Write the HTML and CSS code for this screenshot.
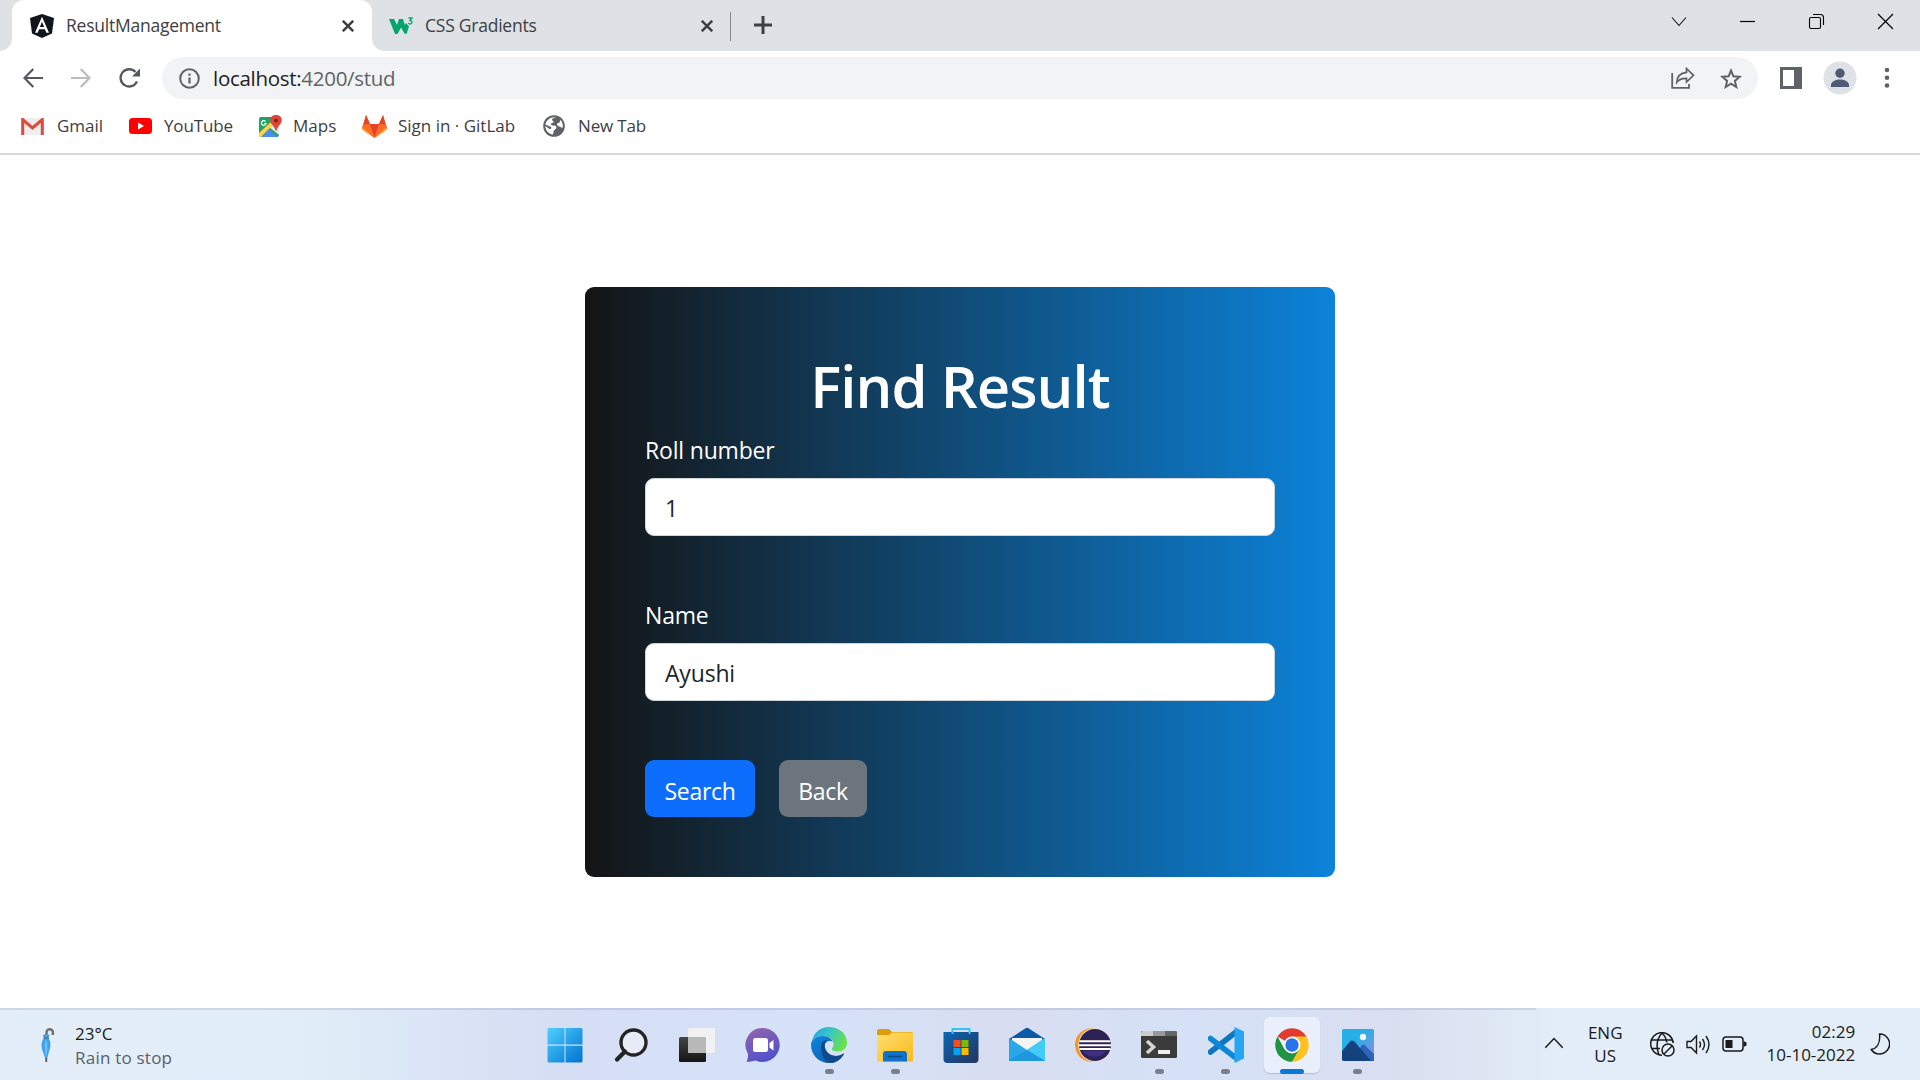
FILE: index.html
```html
<!DOCTYPE html>
<html lang="en">
<head>
<meta charset="utf-8">
<title>ResultManagement</title>
<link rel="stylesheet" href="styles.css">
</head>
<body>
<header class="browser">
  <div class="tabstrip">
    <div class="tab tab-active">
      <svg class="fav" width="24" height="24" viewBox="0 0 24 24"><path d="M12 0l12 4-2 15.500L12 24 2 19.500 0 4z" fill="#10141d"/><path fill-rule="evenodd" d="M12 2.800l7 16h-2.700l-1.400-3.600H9.100l-1.400 3.600H5zm0 5l-2.100 5.200h4.200z" fill="#fff"/></svg>
      <span class="tab-title">ResultManagement</span>
      <svg class="close" width="12" height="12" viewBox="0 0 12 12"><path d="M.8.800l10.400 10.400M11.200.8L.8 11.200" stroke="#3c4043" stroke-width="2.500"/></svg>
    </div>
    <div class="tab tab-second">
      <svg class="fav" width="24" height="18" viewBox="0 0 24 18"><path d="M0 2h5l3 6 2-6h4l2 6 1-2 3 3.500L17.500 17l-2-.5-3.500-6L8.500 17H6z" fill="#04a56d"/><path d="M19.500 1h3.500l-2 2.500c3 0 2.500 3.500 0 3.500-1 0-1.500-.4-1.800-1" fill="none" stroke="#04a56d" stroke-width="1.300"/></svg>
      <span class="tab-title">CSS Gradients</span>
      <svg class="close" width="12" height="12" viewBox="0 0 12 12"><path d="M.8.800l10.400 10.400M11.200.8L.8 11.200" stroke="#3c4043" stroke-width="2.500"/></svg>
    </div>
    <svg class="newtab" width="18" height="18" viewBox="0 0 18 18"><path d="M9 0v18M0 9h18" stroke="#3c4043" stroke-width="3"/></svg>
    <div class="winctl">
      <svg width="69" height="44" viewBox="0 0 69 44"><path d="M28 17.500l7 8 7-8" fill="none" stroke="#111" stroke-width="1.100"/></svg>
      <svg width="69" height="44" viewBox="0 0 69 44"><path d="M27 21.500h15" stroke="#000" stroke-width="1.200"/></svg>
      <svg width="69" height="44" viewBox="0 0 69 44"><rect x="27.500" y="17.500" width="11" height="11" rx="1.500" fill="none" stroke="#000" stroke-width="1.100"/><path d="M31 14.500h7.500a3 3 0 0 1 3 3V25" fill="none" stroke="#000" stroke-width="1.100"/></svg>
      <svg width="69" height="44" viewBox="0 0 69 44"><path d="M27 14l15 15M42 14L27 29" stroke="#000" stroke-width="1.200"/></svg>
    </div>
  </div>
  <div class="toolbar">
    <svg class="nav" width="20" height="20" viewBox="0 0 20 20"><path d="M20 10H1.500M10.300 1L1.500 10l8.800 9" fill="none" stroke="#55585d" stroke-width="2.200"/></svg>
    <svg class="nav" width="20" height="20" viewBox="0 0 20 20"><path d="M0 10h18.500M9.700 1l8.800 9-8.800 9" fill="none" stroke="#babcbe" stroke-width="2.200"/></svg>
    <svg class="nav" width="21" height="20" viewBox="0 0 21 20"><path d="M18 13.500A8.600 8.600 0 1 1 16.500 4" fill="none" stroke="#55585d" stroke-width="2.300"/><path d="M21 .500v8h-8z" fill="#55585d"/></svg>
    <div class="omnibox">
      <svg width="21" height="21" viewBox="0 0 21 21"><circle cx="10.500" cy="10.500" r="9.300" fill="none" stroke="#5f6368" stroke-width="2"/><path d="M10.500 9.500v6M10.500 5.500v2.200" stroke="#5f6368" stroke-width="2.200"/></svg>
      <span class="url">localhost:<span class="url-path">4200/stud</span></span>
      <svg class="share" width="24" height="22" viewBox="0 0 24 22"><path d="M1.200 6v14.800H18V17" fill="none" stroke="#5f6368" stroke-width="1.800"/><path d="M15.500 1.500l7 6.800-7 6.800V11.300c-4.500-.2-7.500 1-9.700 4C6 9.500 9.500 6 15.500 5.300z" fill="none" stroke="#5f6368" stroke-width="1.700"/></svg>
      <svg width="22" height="21" viewBox="0 0 22 21"><path d="M11 2.500l2.400 5.800 6.200.5-4.700 4.100 1.400 6.100L11 15.700 5.700 19l1.400-6.100-4.700-4.100 6.200-.5z" fill="none" stroke="#5f6368" stroke-width="2"/></svg>
    </div>
    <svg class="panel" width="22" height="22" viewBox="0 0 22 22"><path fill-rule="evenodd" d="M0 0h22v22H0zM3 3v16h11V3z" fill="#5f6368"/></svg>
    <svg class="avatar" width="34" height="34" viewBox="0 0 34 34"><circle cx="17" cy="17" r="16.500" fill="#dee1e6"/><circle cx="17" cy="12.300" r="4.700" fill="#4d5b75"/><path d="M8 26v-2c0-3.500 5-5.500 9-5.500s9 2 9 5.500v2z" fill="#4d5b75"/></svg>
    <svg class="dots" width="6" height="22" viewBox="0 0 6 22"><circle cx="3" cy="3" r="2.300" fill="#5f6368"/><circle cx="3" cy="10.800" r="2.300" fill="#5f6368"/><circle cx="3" cy="18.500" r="2.300" fill="#5f6368"/></svg>
  </div>
  <nav class="bookmarks">
    <a class="bm bm-gmail"><svg width="23" height="17" viewBox="0 0 23 17"><rect width="23" height="17" rx="1.500" fill="#eee"/><path d="M1.700 17V1.500L11.500 10l9.800-8.500V17" fill="none" stroke="#dd4b3e" stroke-width="3"/></svg><span>Gmail</span></a>
    <a class="bm bm-yt"><svg width="23" height="16" viewBox="0 0 23 16"><rect width="23" height="16" rx="3.500" fill="#f00"/><path d="M9 4.500v7l6-3.500z" fill="#fff"/></svg><span>YouTube</span></a>
    <a class="bm bm-maps"><svg width="23" height="23" viewBox="0 0 23 23"><rect x="0" y="2" width="20" height="20" rx="2" fill="#1fa463"/><path d="M0 20L18 3l2 2v15L10 12 1 21z" fill="#e5e7e8"/><path d="M0 18L13 6l2 3L2 22H0z" fill="#ffd24a"/><path d="M3 22l7-8 8 8z" fill="#4c8bf5"/><path d="M17 0c6.500 0 7 6 4 9.500-2 2.500-3 4-4 7-1-3-2-4.500-4-7C10 6 10.500 0 17 0z" fill="#e0453a"/><circle cx="17" cy="5.500" r="2" fill="#7a231b"/><path d="M6.500 6.500A2.300 2.300 0 1 0 7 8.500H5" fill="none" stroke="#fff" stroke-width="1.200"/></svg><span>Maps</span></a>
    <a class="bm bm-gl"><svg width="25" height="23" viewBox="0 0 25 23"><path d="M4 0l4 9h9l4-9 3.500 11.500c.5 1.500 0 3-1 4L12.500 23 1.500 15.500c-1-1-1.500-2.500-1-4z" fill="#fc6d26"/><path d="M4 0l4 9h9l4-9 2.500 9-11 13-11-13z" fill="#e24329"/><path d="M1 9.500L8 9l4.500 13L0 13.500zM24 9.500L17 9l-4.500 13L25 13.500z" fill="#fc6d26"/><path d="M.5 12l12 11 12-11-.5 3-11.500 8L1 15z" fill="#fca326"/></svg><span>Sign in · GitLab</span></a>
    <a class="bm bm-new"><svg width="22" height="22" viewBox="0 0 22 22"><circle cx="11" cy="11" r="10.800" fill="#5f6368"/><path d="M13 2.300c-1.500 1-3.500.7-4 2.200s2 1 1.500 2.500-3 .8-2.500 2.500 3 .5 4.500 1.500 1 2.500-.5 3.500-1.500 2-2 5C5.500 19 2.500 15.500 2.300 11l4.200 3c1.500 0 2.200-.5 1.700-2L2.400 9.500C3.200 5 7.500 1.500 13 2.300zM17.500 5c2 2 2.700 4.500 2.200 7.500-1.200.8-2.200-.8-3-1s-2 0-2.500-1.500.5-2 1.800-2.200S16.500 6 17.500 5z" fill="#fff"/></svg><span>New Tab</span></a>
  </nav>
</header>

<main class="page">
  <form class="card">
    <h1>Find Result</h1>
    <label for="roll">Roll number</label>
    <div class="field" id="roll">1</div>
    <label class="l-name" for="name">Name</label>
    <div class="field" id="name">Ayushi</div>
    <div class="actions">
      <button type="button" class="btn btn-primary">Search</button>
      <button type="button" class="btn btn-secondary">Back</button>
    </div>
  </form>
</main>

<footer class="taskbar">
  <div class="weather">
    <svg width="14" height="36" viewBox="0 0 14 36"><path d="M5.500 12V5.500a3.200 3.200 0 0 1 6.400 0V8" fill="none" stroke="#76706e" stroke-width="2.500"/><path d="M2 7.500h6.500l-1 4c2.500 3 2.500 8 .5 13L6 32H4.500L2 25C0 20 0 15 2.500 11.500z" fill="#3fa2ee"/><path d="M5 12c2 6 1.500 13 0 18-1-5-2-12 0-18z" fill="#6fc1fa"/><path d="M5.300 31v4" stroke="#555" stroke-width="1.800"/><path d="M3 11h5" stroke="#5b6b7a" stroke-width="1.200"/></svg>
    <div class="weather-text"><span>23°C</span><span class="w-desc">Rain to stop</span></div>
  </div>
  <div class="apps">
    <div class="app"><svg width="36" height="36" viewBox="0 0 36 36"><defs><linearGradient id="win" x1="0" y1="0" x2="1" y2="1"><stop offset="0" stop-color="#4fd0ff"/><stop offset="1" stop-color="#0072d0"/></linearGradient></defs><path d="M1.500 1H17.500v16.500H.5V2zM18.500 1H34.500l1 1v15.500h-17zM.5 18.800h17V35.500h-16l-1-1zM18.500 18.800h17v15.700l-1 1h-16z" fill="url(#win)"/></svg></div>
    <div class="app"><svg width="36" height="36" viewBox="0 0 36 36"><circle cx="20.500" cy="15.500" r="12.500" fill="#e6ebf7" stroke="#242424" stroke-width="3.400"/><path d="M12 24.500l-8 8" stroke="#242424" stroke-width="4.200" stroke-linecap="round"/></svg></div>
    <div class="app"><svg width="36" height="36" viewBox="0 0 36 36"><defs><linearGradient id="tv" x2="0" y2="1"><stop offset="0" stop-color="#454545"/><stop offset="1" stop-color="#151515"/></linearGradient></defs><rect x="0" y="10" width="27" height="25" rx="1.500" fill="url(#tv)"/><rect x="9" y="1" width="27" height="25" rx="1.500" fill="#f1f1f1"/><path d="M9 10h18v16H10.500L9 24.500z" fill="#b9b9b9"/></svg></div>
    <div class="app"><svg width="36" height="36" viewBox="0 0 36 36"><defs><linearGradient id="chat" x1=".2" y1="0" x2=".6" y2="1"><stop offset="0" stop-color="#9163ad"/><stop offset="1" stop-color="#4f51cb"/></linearGradient></defs><path d="M18 1a17 17 0 1 1-7.500 32.400C7 34.500 3.500 35 1.500 34.800c1-2 2-5 1.300-8.300A17 17 0 0 1 18 1z" fill="url(#chat)"/><rect x="8" y="11" width="15" height="14" rx="2.500" fill="#fff"/><path d="M24.500 16l4-3v10.500l-4-3z" fill="#fff"/></svg></div>
    <div class="app running"><svg width="36" height="36" viewBox="0 0 36 36"><defs><linearGradient id="eg1" x2="1" y2=".4"><stop offset="0" stop-color="#1d9fdc"/><stop offset=".5" stop-color="#36c6c9"/><stop offset="1" stop-color="#66e04e"/></linearGradient><linearGradient id="eg2" x2=".8" y2="1"><stop offset="0" stop-color="#0d86dd"/><stop offset="1" stop-color="#0f5bb0"/></linearGradient></defs><path d="M1 14C3 5 10 0 18 0c10 0 18 7 18 15.500 0 6-4.500 9-9 9-4 0-6-1.200-6-2.500 0-1.500 2-2 1.500-6C22 12 17 9 11.500 9 6 9 2 11.500 1 14z" fill="url(#eg1)"/><path d="M0 18C0 12.500 5 9 11.500 9 17 9 21 12 21.800 15c-2-2-8-1.500-8 4 0 6 6 10 11 10 3.500 0 6-1.500 8.200-2.300C30 32.500 24.500 36 18 36 8 36 0 28 0 18z" fill="url(#eg2)"/><path d="M10 20c0-4 2-7 7-7-4 2-3.500 6-3 8 1.500 5 6 8 11 8 3.500 0 6-2 8.200-2.500C30 32.500 25 36 20 36c-6 0-10-8-10-16z" fill="#114a8b"/></svg></div>
    <div class="app running"><svg width="36" height="36" viewBox="0 0 36 36"><defs><linearGradient id="fold" x2="1" y2="1"><stop offset="0" stop-color="#ffdf70"/><stop offset="1" stop-color="#fdb91a"/></linearGradient></defs><path d="M0 3.500L1.500 2H12l3 3h20l1 1v6H0z" fill="#dd9d08"/><path d="M0 8h12l3-2.500h21V34.500H0z" fill="url(#fold)"/><path d="M6 34.500V27a3 3 0 0 1 3-3h18a3 3 0 0 1 3 3v7.500z" fill="#0f72c6"/><path d="M11 29.500h14" stroke="#0a4b8c" stroke-width="1.500"/></svg></div>
    <div class="app"><svg width="36" height="36" viewBox="0 0 36 36"><defs><linearGradient id="store" x2="1" y2="1"><stop offset="0" stop-color="#0a66b5"/><stop offset="1" stop-color="#25345c"/></linearGradient></defs><path d="M.5 5h35v27a4 4 0 0 1-4 4h-27a4 4 0 0 1-4-4z" fill="url(#store)"/><path d="M9.500 7V2h17v5" fill="none" stroke="#35c4f0" stroke-width="2"/><path d="M10.500 13h7v7h-7z" fill="#f25022"/><path d="M18.500 13h7v7h-7z" fill="#7fba00"/><path d="M10.500 21h7v7h-7z" fill="#00a4ef"/><path d="M18.500 21h7v7h-7z" fill="#ffb900"/></svg></div>
    <div class="app"><svg width="36" height="36" viewBox="0 0 36 36"><path d="M0 12L17 1q1-.7 2 0l17 11v6H0z" fill="#0a5aa8"/><path d="M3 11h30v12H3z" fill="#f4f4f4"/><path d="M0 11l18 12L36 11v23H0z" fill="#2aa7e8"/><path d="M36 11L18 23l18 11z" fill="#41cdf6"/><path d="M0 34l0-1 18-10 18 11z" fill="#1f97df"/></svg></div>
    <div class="app"><svg width="36" height="36" viewBox="0 0 36 36"><circle cx="16.800" cy="18" r="16.800" fill="#f7941e"/><circle cx="20" cy="18" r="16.800" fill="#f3e9e2"/><circle cx="20" cy="18" r="16" fill="#2c2255"/><path d="M8 24h23a12 8 0 0 1-23 0z" fill="#3d2f84"/><path d="M4.500 14.300h31M4 18.200h32M4.500 22h31" stroke="#fff" stroke-width="2"/></svg></div>
    <div class="app running"><svg width="36" height="36" viewBox="0 0 36 36"><rect y="4" width="36" height="27" rx="1.500" fill="#3b3b3b"/><path d="M0 9V5.500L1.500 4H12v5z" fill="#ccc"/><path d="M12 4h12v5H12z" fill="#999"/><path d="M24 4h10.500L36 5.500V9H24z" fill="#666"/><path d="M6 14l6.500 6L6 26" fill="none" stroke="#d5d5d5" stroke-width="3.600"/><path d="M17 25h12" stroke="#eee" stroke-width="4"/></svg></div>
    <div class="app running"><svg width="36" height="36" viewBox="0 0 36 36"><path d="M28 5L2.500 25" stroke="#0b77c0" stroke-width="5.500" stroke-linecap="round"/><path d="M2.500 11.500L28 31" stroke="#0e88d6" stroke-width="5.500" stroke-linecap="round"/><path d="M26.500 0L36 4.500v27L26.500 36z" fill="#27a5f3"/></svg></div>
    <div class="app active"><svg width="36" height="36" viewBox="0 0 36 36"><path d="M18 18L3.500 9.600A16.800 16.800 0 0 1 32.500 9.600z" fill="#e33b2e"/><path d="M18 9.600h14.500A16.800 16.800 0 0 1 18 34.800l8-14z" fill="#fcc31e"/><path d="M10.500 22.200L3.500 9.600A16.800 16.800 0 0 0 18 34.800l7-12z" fill="#229342"/><circle cx="18" cy="18" r="8.400" fill="#fff"/><circle cx="18" cy="18" r="6.700" fill="#2a74ea"/></svg></div>
    <div class="app running"><svg width="36" height="36" viewBox="0 0 36 36"><defs><linearGradient id="ph" x2="1" y2="1"><stop offset=".4" stop-color="#27afe8"/><stop offset="1" stop-color="#a184d8"/></linearGradient></defs><rect x="2" y="2" width="32" height="32" rx="1.500" fill="url(#ph)"/><circle cx="23" cy="10" r="3.200" fill="#f3f8fc"/><path d="M14 30l8-12q1-1.200 2.500 0L34 27v7H14z" fill="#2c63bd"/><path d="M2 24l8-9.500q2-2 4.500 0L31 34H3.500L2 32.500z" fill="#14427f"/></svg></div>
  </div>
  <div class="tray">
    <svg class="chev" width="20" height="12" viewBox="0 0 20 12"><path d="M1.300 10.700L10 1.500l8.700 9.200" fill="none" stroke="#1b1b1b" stroke-width="1.500"/></svg>
    <div class="lang"><span>ENG</span><span>US</span></div>
    <svg class="globe" width="25" height="25" viewBox="0 0 25 25"><g fill="none" stroke="#1b1b1b" stroke-width="1.500"><path d="M12 23.200A11.300 11.300 0 1 1 23.200 11"/><path d="M9 23C6 15 6.500 7 12 1c3 3 4.500 6.500 4.800 9.500M2 8h20.500M2 16.500h8"/><circle cx="18" cy="18" r="6"/><path d="M14 22l8-8"/></g></svg>
    <svg class="vol" width="25" height="21" viewBox="0 0 25 21"><g fill="none" stroke="#1b1b1b" stroke-width="1.400"><path d="M1 7.500h4L10.500 2v17L5 13.500H1z"/><path d="M13.500 7.500q2 3 0 6M16.500 5q4 5.500 0 11M20 2q6 8.500 0 17"/></g></svg>
    <svg class="batt" width="25" height="16" viewBox="0 0 25 16"><rect x="1" y="1" width="20" height="14" rx="3" fill="none" stroke="#1b1b1b" stroke-width="1.500"/><rect x="3.500" y="4" width="7" height="8" fill="#1b1b1b"/><path d="M21.500 5l3 1.500v3l-3 1.500z" fill="#1b1b1b"/></svg>
    <div class="clock"><span>02:29</span><span>10-10-2022</span></div>
    <svg class="moon" width="20" height="22" viewBox="0 0 20 22"><path d="M9.500 1A10 10 0 1 1 1.200 16.500C7 15.500 10.500 10 9.500 1z" fill="none" stroke="#1b1b1b" stroke-width="1.500" stroke-linejoin="round"/></svg>
  </div>
</footer>
</body>
</html>
```
FILE: styles.css
```css
* { box-sizing: border-box; }
body {
  margin: 0;
  width: 1920px;
  height: 1080px;
  overflow: hidden;
  display: flex;
  flex-direction: column;
  background: #fff;
  font-family: "Open Sans", "Noto Sans", sans-serif;
  color: #3c4043;
}
svg { display: block; flex: none; }
span { white-space: nowrap; }

/* browser chrome */
.browser { height: 155px; border-bottom: 2px solid #d9d9da; flex: none; }
.tabstrip { display: flex; height: 51px; background: #dee1e6; padding-left: 12px; }
.tab { display: flex; align-items: center; font-size: 17.5px; letter-spacing: -.24px; }
.tab-active { width: 360px; padding: 0 18px 0 18px; background: #fff; border-radius: 12px 12px 0 0; position: relative; }
.tab-active::before, .tab-active::after { content: ""; position: absolute; bottom: 0; width: 12px; height: 12px; }
.tab-active::before { left: -12px; background: radial-gradient(circle at 0 0, transparent 11.5px, #fff 12px); }
.tab-active::after { right: -12px; background: radial-gradient(circle at 100% 0, transparent 11.5px, #fff 12px); }
.tab-title { margin-left: 12px; padding-bottom: 1px; }
.close { margin-left: auto; }
.tab-second { width: 359px; padding: 0 18px 0 17px; position: relative; }
.tab-second::after { content: ""; position: absolute; right: 0; top: 12px; width: 1px; height: 29px; background: #84878b; }
.newtab { margin: 16px 0 0 23px; }
.winctl { display: flex; margin-left: auto; }

.toolbar { display: flex; align-items: center; height: 54px; padding-left: 23px; }
.nav { margin-right: 28px; }
.omnibox { display: flex; align-items: center; width: 1596px; height: 42px; margin-left: -6px; padding: 0 16px 0 17px; border-radius: 21px; background: #f1f3f4; font-size: 20.5px; letter-spacing: -.29px; }
.url { margin-left: 13px; color: #202124; }
.url-path { color: #5f6368; }
.share { margin: 0 25px 0 auto; }
.panel { margin-left: 22px; }
.avatar { margin-left: 21px; }
.dots { margin-left: 27px; }

.bookmarks { display: flex; align-items: center; height: 42px; padding-left: 21px; font-size: 17px; }
.bm { display: flex; align-items: center; gap: 12px; }
.bm span { padding-bottom: 2px; }
.bm-gmail { width: 108px; gap: 13px; }
.bm-yt { width: 130px; letter-spacing: -.15px; }
.bm-maps { width: 103px; gap: 11px; }
.bm-gl { width: 181px; gap: 11px; }
.bm-new { gap: 13px; letter-spacing: -.15px; }

/* page */
.page { flex: 1; padding-top: 131.5px; }
.card { width: 750px; height: 590.5px; margin: 0 auto; padding: 60px; border-radius: 9px; background: linear-gradient(90deg, #141414, #0c83da); color: #fff; font-size: 23px; letter-spacing: -.18px; }
h1 { margin: 0 0 7px; font-size: 58px; font-weight: 600; line-height: 78px; letter-spacing: -.95px; text-align: center; }
label { display: block; line-height: 36px; margin-bottom: 10.5px; }
.field { height: 57.5px; padding: 3px 19px 0; border: 1px solid #ced4da; border-radius: 9px; background: #fff; color: #212529; line-height: 53px; }
.l-name { margin-top: 61px; }
.actions { display: flex; gap: 24px; margin-top: 59.5px; }
.btn { height: 57px; padding: 4px 0 0; border: 0; border-radius: 9px; color: #fff; font: inherit; letter-spacing: -.3px; }
.btn-primary { width: 110px; background: #0d6efd; }
.btn-secondary { width: 88px; background: #6c757d; }

/* taskbar */
.taskbar { display: flex; flex: none; height: 72px; background: linear-gradient(90deg, #e3eef9 0, #e1edf8 300px, #d6def4 560px, #d5e2f8 800px, #d8def1 1000px, #d5e1f6 1190px, #dadff0 1400px, #e2edf8 1560px, #e2edf8 100%); color: #1b1b1b; font-size: 17px; position: relative; }
.taskbar::before { content: ""; position: absolute; left: 0; top: 0; width: 1536px; height: 2px; background: rgba(120, 135, 170, .22); }
.weather { display: flex; width: 531.6px; padding: 19px 0 0 41px; gap: 20px; }
.weather-text { display: flex; flex-direction: column; line-height: 24px; margin-top: -5px; }
.w-desc { color: #5a6068; letter-spacing: .22px; }
.apps { display: flex; }
.app { width: 66.1px; display: flex; flex-direction: column; align-items: center; padding-top: 19px; position: relative; }
.app svg { position: relative; }
.running::after, .active::after { content: ""; width: 9px; height: 5px; margin-top: 6px; border-radius: 3px; background: #7a7f8a; position: relative; }
.active::after { width: 24px; background: #0b78d6; }
.active::before { content: ""; position: absolute; left: 5px; top: 9px; width: 56px; height: 56px; border-radius: 6px; background: #eaf0fb; box-shadow: 0 1px 1px rgba(90, 100, 140, .3); }
.tray { display: flex; flex: 1; }
.chev { margin: 29px 0 0 153.4px; }
.lang { display: flex; flex-direction: column; align-items: center; width: 66px; margin: 14px 0 0 8px; line-height: 22.5px; }
.globe { margin: 24px 0 0 12px; }
.vol { margin: 26px 0 0 11px; }
.batt { margin: 28px 0 0 11px; }
.clock { display: flex; flex-direction: column; align-items: flex-end; width: 108px; margin-top: 13px; line-height: 22.5px; }
.moon { margin: 25px 0 0 15px; }
```
